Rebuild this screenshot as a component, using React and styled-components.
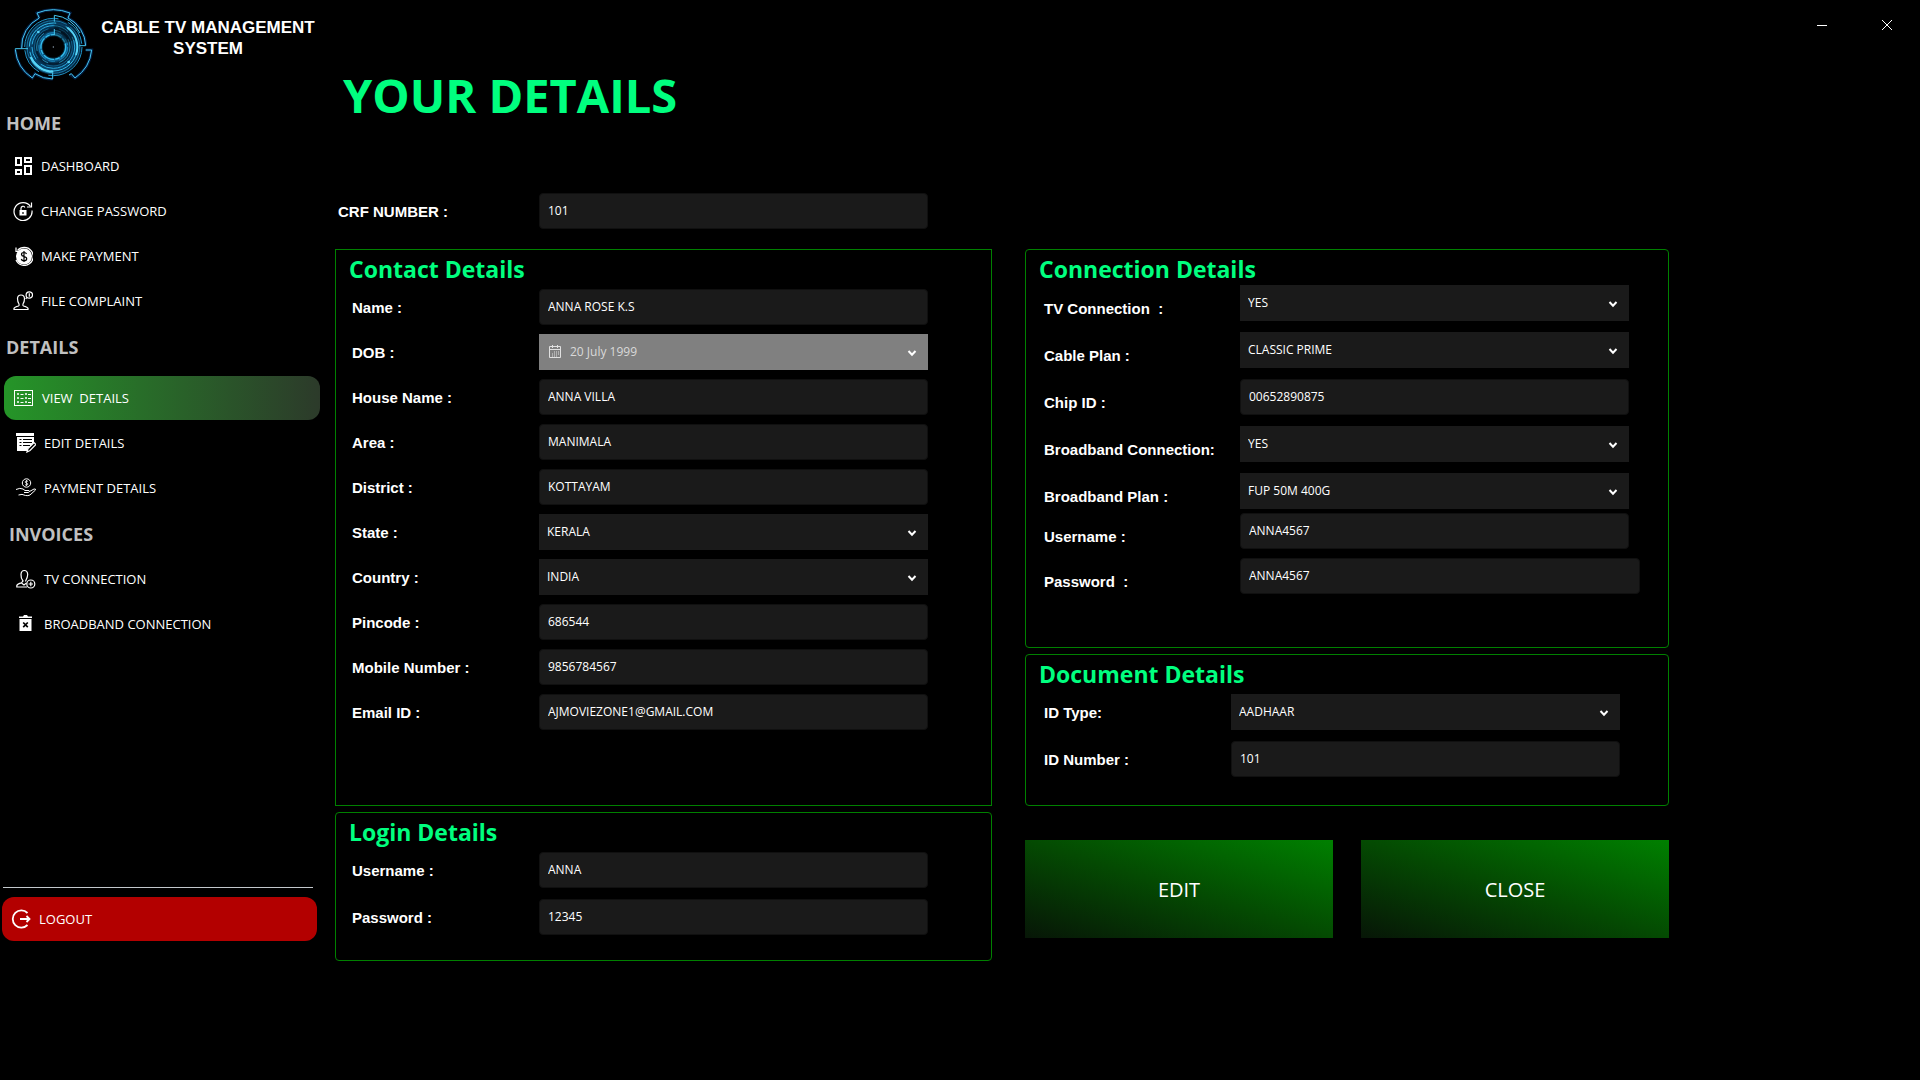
import React from "react";
import styled, { createGlobalStyle } from "styled-components";

const contactFields = [
  { id: "name", label: "Name :", value: "ANNA ROSE K.S" },
  { id: "dob", label: "DOB :", value: "20 July 1999", type: "date" },
  { id: "house", label: "House Name :", value: "ANNA VILLA" },
  { id: "area", label: "Area :", value: "MANIMALA" },
  { id: "district", label: "District :", value: "KOTTAYAM" },
  { id: "state", label: "State :", value: "KERALA", type: "select" },
  { id: "country", label: "Country :", value: "INDIA", type: "select" },
  { id: "pincode", label: "Pincode :", value: "686544" },
  { id: "mobile", label: "Mobile Number :", value: "9856784567" },
  { id: "email", label: "Email ID :", value: "AJMOVIEZONE1@GMAIL.COM" },
];

const loginFields = [
  { id: "login-user", label: "Username :", value: "ANNA" },
  { id: "login-pass", label: "Password :", value: "12345" },
];

const planFields = [
  { id: "tv", label: "TV Connection  :", value: "YES", type: "select" },
  { id: "cable", label: "Cable Plan :", value: "CLASSIC PRIME", type: "select" },
  { id: "chip", label: "Chip ID :", value: "00652890875" },
  { id: "broadband", label: "Broadband Connection:", value: "YES", type: "select" },
  { id: "bb-plan", label: "Broadband Plan :", value: "FUP 50M 400G", type: "select" },
];

const accountFields = [
  { id: "bb-user", label: "Username :", value: "ANNA4567" },
  { id: "bb-pass", label: "Password  :", value: "ANNA4567", wide: true },
];

const documentFields = [
  { id: "id-type", label: "ID Type:", value: "AADHAAR", type: "select" },
  { id: "id-number", label: "ID Number :", value: "101" },
];

function Logo() {
  return (
    <LogoSvg viewBox="36 16 249 231" fill="none" aria-hidden="true">
      <defs>
        <radialGradient id="core" gradientUnits="userSpaceOnUse" cx="160" cy="142" r="84">
          <stop offset="0.36" stopColor="#000" />
          <stop offset="0.46" stopColor="#0f6ea3" />
          <stop offset="0.6" stopColor="#031b30" />
          <stop offset="0.8" stopColor="#07456e" />
          <stop offset="1" stopColor="#032036" />
        </radialGradient>
      </defs>
      <g stroke="#052a5c" strokeWidth="9" opacity="0.7">
        <path d="M118 55 L111 40 Q160 20 210 40 L204 55 A96 96 0 0 1 257 138" />
        <path d="M118 55 A96 96 0 0 0 65 146" />
        <path d="M46 150 A115 115 0 0 0 97 235 L105 222 A96 96 0 0 0 158 238" />
        <path d="M257 151 H275 A115 115 0 0 1 225 235 L210 224" />
      </g>
      <circle cx="160" cy="142" r="84" fill="url(#core)" />
      <g stroke="#35bdec">
        <circle cx="160" cy="142" r="37" strokeWidth="4" strokeDasharray="34 4 14 3" />
        <circle cx="160" cy="142" r="43" strokeWidth="3" strokeDasharray="50 12 20 8" stroke="#1a86bb" />
        <circle cx="160" cy="142" r="50" strokeWidth="2" strokeDasharray="60 34 20 30" />
        <circle cx="160" cy="142" r="57" strokeWidth="2" strokeDasharray="110 32" stroke="#177aab" />
        <circle cx="160" cy="142" r="64" strokeWidth="3" strokeDasharray="140 20 40 8" stroke="#2aa9dd" />
        <circle cx="160" cy="142" r="72" strokeWidth="3" strokeDasharray="120 30 60 16" />
        <circle cx="160" cy="142" r="79" strokeWidth="2" strokeDasharray="200 12" stroke="#2196cc" />
        <circle cx="160" cy="142" r="86" strokeWidth="3" strokeDasharray="150 30 80 10" stroke="#2196cc" />
      </g>
      <path d="M202 84 A72 72 0 0 1 228 166" stroke="#56d4f7" strokeWidth="6" />
      <path d="M92 172 A74 74 0 0 0 160 216" stroke="#56d4f7" strokeWidth="7" />
      <path d="M163 142 L163 74 A68 68 0 0 1 226 120 Z" fill="#000" opacity="0.35" />
      <circle cx="160" cy="142" r="30" fill="#000" />
      <g stroke="#45c6f0" strokeWidth="3">
        <path d="M118 55 L111 40 Q160 20 210 40 L204 55 A96 96 0 0 1 257 138 H238" />
        <path d="M118 55 A96 96 0 0 0 65 146 M46 150 V147 H84" />
        <path d="M46 150 A115 115 0 0 0 97 235 L105 222 A96 96 0 0 0 158 238 V220" />
        <path d="M257 151 H275 A115 115 0 0 1 225 235 L214 222 L207 226" />
        <path d="M163 66 V47 A95 95 0 0 1 240 100 M163 88 V106" />
      </g>
      <circle cx="115" cy="97" r="4" fill="#56d4f7" />
      <circle cx="206" cy="187" r="4" fill="#56d4f7" />
      <circle cx="160" cy="142" r="2" fill="#9ab" />
    </LogoSvg>
  );
}

const icons = {
  dashboard: (
    <g strokeWidth="2">
      <path d="M3 2h5v7H3zM12 2h6v4h-6zM3 14h5v4H3zM12 10h6v8h-6z" />
    </g>
  ),
  lock: (
    <>
      <path d="M17.5 5.5A9 9 0 1 0 19 9.5" />
      <path d="M18.5 1.5V6H14" />
      <path d="M8 9V7.2a2 2 0 0 1 3.8-.8" />
      <rect x="6.5" y="9" width="7" height="5.5" fill="#fff" stroke="none" />
      <path d="M10 11v2" stroke="#000" />
    </>
  ),
  payment: (
    <>
      <circle cx="11" cy="10.5" r="8" fill="#fff" stroke="none" />
      <path d="M4.5 4.5A9 9 0 1 1 3 14" />
      <path d="M3 1.5v4h4" />
      <path d="M13.5 8Q13 6.500 11 6.500 8.500 6.500 8.500 8.500 8.500 10 11 10.500 13.700 11 13.700 12.800 13.700 14.800 11 14.800 8.700 14.800 8.300 13M11 5v11" stroke="#000" />
    </>
  ),
  complaint: (
    <>
      <path d="M1 18.500v-1.200Q1.500 16 5.500 15q1-.5.5-2Q4.500 11 4.500 7.500 4.700 4 8 4q3.300 0 3.500 3.500 0 3.500-1.500 5.500-.5 1.500.5 2 4 1 4.500 2.300v1.200z" />
      <circle cx="16.300" cy="4" r="3.200" />
      <path d="M13.800 6.200l-1 1.800M16.300 2.300v3.400" />
    </>
  ),
  list: (
    <g strokeWidth="1">
      <rect x="0.5" y="2.5" width="18" height="15" />
      <path d="M3.500 5.500h1v1h-1zM3.500 9.500h1v1h-1zM3.500 13.500h1v1h-1zM11.500 5.500h1v1h-1zM11.500 9.500h1v1h-1zM11.500 13.500h1v1h-1z" />
      <path d="M6.500 6.500h3M6.500 10.500h3M6.500 14.500h3M14 6.500h3M14 10.500h3M14 14.500h3" />
    </g>
  ),
  edit: (
    <>
      <path d="M0 0h18v3H0zM1 4h17v9l-6 5H1z" fill="#fff" stroke="none" />
      <path d="M3.500 6.500h2M3.500 9.500h2M3.500 12.500h2M7 6.500h9M7 9.500h9M7 12.500h7" stroke="#000" strokeWidth="1" />
      <path d="M11 19l1-3.500 6-6 2 2-6 6z" fill="#000" />
    </>
  ),
  hand: (
    <g strokeWidth="1">
      <circle cx="10.500" cy="5" r="4.200" />
      <path d="M12 3.300q-1.500-.8-2.700.2-.5 1.200 1.200 1.600 1.800.4 1.200 1.500-1.200 1-2.700.1M10.500 2v6" strokeWidth="0.8" />
      <path d="M0 11.500Q4 9.500 7 11l2 1.500h4q1 1.500-.5 2H8M13.500 13.500l4.500-2.500q2-.3 1.500 1l-5.500 5Q12 18 9.500 17.500 6 15.500 2.500 17" />
    </g>
  ),
  userAdd: (
    <>
      <path d="M11 18H.8v-1.500Q1.500 14.500 5.500 13.800L7 12Q4.800 9.500 5 5.500 5.200 1.500 8.300 1.500q3.200 0 3.400 4-.2 3-1.700 5.500l-.5 1.500" />
      <path d="M5.500 14l2.500 2 2.500-2" />
      <circle cx="14.800" cy="15" r="4" />
      <path d="M14.800 12.800v4.400M12.600 15h4.400" />
    </>
  ),
  bin: (
    <>
      <path d="M3 2.500h4L8 1h3l1 1.500h4V4H3zM3.500 5h12v12h-12z" fill="#fff" stroke="none" />
      <path d="M7.200 8.500l4.600 4.600M11.800 8.500l-4.600 4.600" stroke="#000" strokeWidth="1.700" />
    </>
  ),
  logout: (
    <g strokeWidth="1.800">
      <path d="M16.500 4A8.600 8.600 0 1 0 16.500 16" />
      <path d="M9 10h9M15.500 7 18.500 10l-3 3" />
    </g>
  ),
};

function Icon({ name }) {
  return (
    <IconSvg viewBox="0 0 20 20" aria-hidden="true">
      {icons[name]}
    </IconSvg>
  );
}

function Chevron() {
  return (
    <ChevronSvg viewBox="0 0 10 8" aria-hidden="true">
      <path d="M1.500 2 5 5.700 8.500 2" />
    </ChevronSvg>
  );
}

function Field({ id, label, value, type, wide, labelWidth, drop }) {
  return (
    <Row>
      <Label htmlFor={id} $width={labelWidth} $drop={drop}>
        {label}
      </Label>
      {type ? (
        <Control $wide={wide}>
          {type === "date" && (
            <CalendarSvg viewBox="0 0 14 14" aria-hidden="true">
              <path d="M1.500 2.500h11v11h-11zM1.500 5.500h11M4.500 1v3M9.500 1v3" />
              <path d="M6 8h5M4 10h7M4 12h5" strokeDasharray="1 1" />
            </CalendarSvg>
          )}
          <Select id={id} defaultValue={value} disabled={type === "date"} $date={type === "date"}>
            <option>{value}</option>
          </Select>
          <Chevron />
        </Control>
      ) : (
        <Control $wide={wide}>
          <Input id={id} type="text" defaultValue={value} />
        </Control>
      )}
    </Row>
  );
}

function Section({ title, children, bottom, square }) {
  return (
    <Panel $bottom={bottom} $square={square}>
      <PanelTitle>{title}</PanelTitle>
      {children}
    </Panel>
  );
}

function App() {
  return (
    <Page>
      <GlobalStyle />
      <Sidebar>
        <Brand>
          <Logo />
          <BrandName>CABLE TV MANAGEMENT SYSTEM</BrandName>
        </Brand>
        <nav>
          <GroupTitle>HOME</GroupTitle>
          <NavList>
            <NavItem href="#dashboard"><Icon name="dashboard" />DASHBOARD</NavItem>
            <NavItem href="#password"><Icon name="lock" />CHANGE PASSWORD</NavItem>
            <NavItem href="#pay"><Icon name="payment" />MAKE PAYMENT</NavItem>
            <NavItem href="#complaint"><Icon name="complaint" />FILE COMPLAINT</NavItem>
          </NavList>
          <GroupTitle $space={17}>DETAILS</GroupTitle>
          <NavList>
            <NavItem href="#view" $active $indent={10}><Icon name="list" />VIEW  DETAILS</NavItem>
            <NavItem href="#edit" $indent={12}><Icon name="edit" />EDIT DETAILS</NavItem>
            <NavItem href="#payments" $indent={12}><Icon name="hand" />PAYMENT DETAILS</NavItem>
          </NavList>
          <GroupTitle $space={11} $indent={9}>INVOICES</GroupTitle>
          <NavList>
            <NavItem href="#tv" $indent={12}><Icon name="userAdd" />TV CONNECTION</NavItem>
            <NavItem href="#broadband" $indent={12}><Icon name="bin" />BROADBAND CONNECTION</NavItem>
          </NavList>
        </nav>
        <SidebarFooter>
          <Divider />
          <Logout type="button"><Icon name="logout" />LOGOUT</Logout>
        </SidebarFooter>
      </Sidebar>
      <Main>
        <WindowBar>
          <WindowButton type="button" aria-label="Minimize">
            <svg viewBox="0 0 10 10"><path d="M0 5.500h10" /></svg>
          </WindowButton>
          <WindowButton type="button" aria-label="Close window">
            <svg viewBox="0 0 10 10"><path d="M0 0l10 10M10 0 0 10" /></svg>
          </WindowButton>
        </WindowBar>
        <Content>
          <Title>YOUR DETAILS</Title>
          <CrfRow>
            <Field id="crf" label="CRF NUMBER :" value="101" labelWidth={201} />
          </CrfRow>
          <Columns>
            <Column>
              <Section title="Contact Details" bottom={75} square>
                <Fields $top={4} $gap={9}>
                  {contactFields.map((f) => <Field key={f.id} {...f} />)}
                </Fields>
              </Section>
              <Section title="Login Details" bottom={25}>
                <Fields $top={4}>
                  {loginFields.map((f) => <Field key={f.id} {...f} />)}
                </Fields>
              </Section>
            </Column>
            <Column>
              <Section title="Connection Details" bottom={53}>
                <Fields $indent={18}>
                  {planFields.map((f) => <Field key={f.id} {...f} labelWidth={196} drop />)}
                </Fields>
                <Fields $top={4} $gap={9} $indent={18}>
                  {accountFields.map((f) => <Field key={f.id} {...f} labelWidth={196} drop />)}
                </Fields>
              </Section>
              <Section title="Document Details" bottom={28}>
                <Fields $top={4} $indent={18}>
                  {documentFields.map((f) => <Field key={f.id} {...f} />)}
                </Fields>
              </Section>
              <Actions>
                <ActionButton type="button">EDIT</ActionButton>
                <ActionButton type="button">CLOSE</ActionButton>
              </Actions>
            </Column>
          </Columns>
        </Content>
      </Main>
    </Page>
  );
}

const GlobalStyle = createGlobalStyle`
  * {
    box-sizing: border-box;
  }

  body {
    margin: 0;
    background: #000;
    color: #fff;
    font-family: "Open Sans", "Noto Sans", sans-serif;
  }
`;

const Page = styled.div`
  display: grid;
  grid-template-columns: 320px minmax(0, 1fr);
  min-width: 1200px;
`;

const Sidebar = styled.aside`
  display: flex;
  flex-direction: column;
  padding-bottom: 20px;
`;

const Brand = styled.div`
  display: flex;
  gap: 4px;
  height: 99px;
  padding: 5px 3px 0 12px;
`;

const LogoSvg = styled.svg`
  flex: none;
  width: 83px;
  height: 77px;
`;

const BrandName = styled.div`
  flex: 1;
  padding-top: 12px;
  font: bold 17px/21px "Liberation Sans", Arial, sans-serif;
  text-align: center;
`;

const GroupTitle = styled.h2`
  margin: 12px 0 ${(p) => p.$space || 9}px;
  padding-left: ${(p) => p.$indent || 6}px;
  color: #c0c0c0;
  font-size: 18px;
  font-weight: 700;
  line-height: 24px;
`;

const NavList = styled.div`
  display: flex;
  flex-direction: column;
  gap: 1px;
  padding-left: 4px;
`;

const NavItem = styled.a`
  display: flex;
  align-items: center;
  gap: 8px;
  height: 44px;
  padding-left: ${(p) => p.$indent || 9}px;
  border-radius: 12px;
  background: ${(p) => (p.$active ? "linear-gradient(to right, #259528, #2c3a2a)" : "none")};
  color: #fff;
  font-size: 13px;
  font-weight: 500;
  text-decoration: none;
  white-space: pre;
`;

const IconSvg = styled.svg`
  flex: none;
  width: 20px;
  height: 20px;
  fill: none;
  stroke: #fff;
  stroke-width: 1.2;
`;

const SidebarFooter = styled.div`
  margin-top: auto;
  padding: 0 3px 0 2px;
`;

const Divider = styled.hr`
  height: 1px;
  margin: 0 4px 9px 1px;
  border: 0;
  background: #c3c8cc;
`;

const Logout = styled.button`
  display: flex;
  align-items: center;
  gap: 8px;
  width: 100%;
  height: 44px;
  padding: 0 9px;
  border: 0;
  border-radius: 12px;
  background: #b30000;
  color: #fff;
  font: 500 13px "Open Sans", "Noto Sans", sans-serif;
`;

const Main = styled.main`
  min-width: 0;
`;

const WindowBar = styled.div`
  display: flex;
  justify-content: flex-end;
  height: 50px;
  padding-right: 1px;
`;

const WindowButton = styled.button`
  display: flex;
  align-items: center;
  justify-content: center;
  width: 65px;
  border: 0;
  background: none;

  svg {
    width: 10px;
    height: 10px;
    stroke: #fff;
  }
`;

const Content = styled.div`
  max-width: 1349px;
  padding-left: 15px;
`;

const Title = styled.h1`
  margin: 13px 0 66px;
  padding-left: 8px;
  color: #00ff7f;
  font-size: 47px;
  font-weight: 700;
  line-height: 64px;
`;

const CrfRow = styled.div`
  margin-bottom: 20px;
  padding-left: 3px;
`;

const Columns = styled.div`
  display: grid;
  grid-template-columns: 657fr 644fr;
  gap: 33px;
`;

const Column = styled.div`
  display: flex;
  flex-direction: column;
  gap: 6px;
  min-width: 0;
`;

const Panel = styled.section`
  padding-bottom: ${(p) => p.$bottom}px;
  border: 1px solid #008000;
  border-radius: ${(p) => (p.$square ? 0 : 4)}px;
`;

const PanelTitle = styled.h2`
  margin: 0;
  padding: 4px 0 1px 13px;
  color: #00ff7f;
  font-size: 23px;
  font-weight: 700;
  line-height: 30px;
`;

const Fields = styled.div`
  display: flex;
  flex-direction: column;
  gap: ${(p) => p.$gap || 11}px;
  padding: ${(p) => p.$top || 0}px 16px 0 ${(p) => p.$indent || 16}px;
`;

const Row = styled.div`
  display: flex;
  height: 36px;
`;

const Label = styled.label`
  flex: none;
  width: ${(p) => p.$width || 187}px;
  padding-top: ${(p) => (p.$drop ? 14 : 9)}px;
  font: bold 15px/20px "Liberation Sans", Arial, sans-serif;
  white-space: pre;
`;

const Control = styled.div`
  position: relative;
  flex: 0 1 ${(p) => (p.$wide ? 400 : 389)}px;
  min-width: 0;
`;

const Input = styled.input`
  width: 100%;
  height: 36px;
  padding: 0 8px 2px;
  border: 1px solid #101010;
  border-radius: 4px;
  background: #1a1a1a;
  color: #fff;
  font: 12px "Open Sans", "Noto Sans", sans-serif;
`;

const Select = styled.select`
  appearance: none;
  display: block;
  width: 100%;
  height: 36px;
  padding: 0 30px 2px ${(p) => (p.$date ? 31 : 8)}px;
  border: 0;
  border-radius: 0;
  background: ${(p) => (p.$date ? "#808080" : "#1a1a1a")};
  color: ${(p) => (p.$date ? "#d9d9d9" : "#fff")};
  font: 12px "Open Sans", "Noto Sans", sans-serif;
  opacity: 1;
`;

const ChevronSvg = styled.svg`
  position: absolute;
  top: 15px;
  right: 11px;
  width: 10px;
  height: 8px;
  fill: none;
  stroke: #fff;
  stroke-width: 2;
  pointer-events: none;
`;

const CalendarSvg = styled.svg`
  position: absolute;
  top: 10px;
  left: 9px;
  width: 14px;
  height: 14px;
  fill: none;
  stroke: #e0e0e0;
`;

const Actions = styled.div`
  display: grid;
  grid-template-columns: 1fr 1fr;
  gap: 28px;
  margin-top: 28px;
`;

const ActionButton = styled.button`
  height: 98px;
  padding-top: 2px;
  border: 0;
  background: linear-gradient(to top right, #071607, #044a02 50%, #008000);
  color: #fff;
  font: 500 20px "Open Sans", "Noto Sans", sans-serif;
`;

export default App;
